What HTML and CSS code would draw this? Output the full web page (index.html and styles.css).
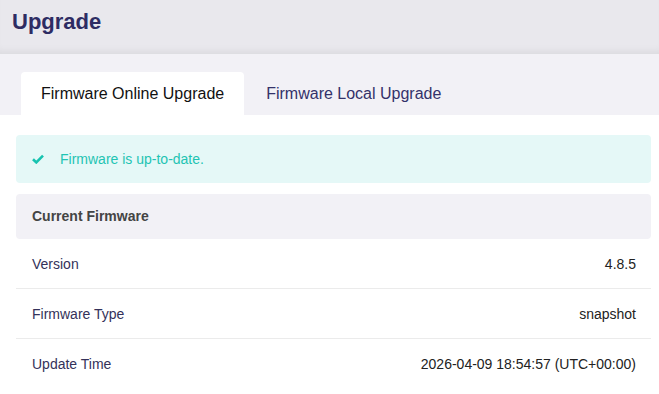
FILE: index.html
```html
<!DOCTYPE html>
<html lang="en">
<head>
  <meta charset="UTF-8">
  <meta name="viewport" content="width=device-width, initial-scale=1.0">
  <title>Upgrade</title>
  <link rel="stylesheet" href="styles.css">
</head>
<body>
  <div class="page-header">
    <h1>Upgrade</h1>
  </div>

  <div class="tabs">
    <div class="tab active">Firmware Online Upgrade</div>
    <div class="tab">Firmware Local Upgrade</div>
  </div>

  <div class="content">
    <div class="alert">
      <svg class="alert-icon" viewBox="0 0 12 10" width="12" height="10">
        <path d="M1 5.2 L4.3 8.4 L11 1.6" fill="none" stroke="#17c3b0" stroke-width="2.6"/>
      </svg>
      <span>Firmware is up-to-date.</span>
    </div>

    <div class="info-table">
      <div class="info-head">Current Firmware</div>
      <div class="info-row">
        <span>Version</span>
        <span>4.8.5</span>
      </div>
      <div class="info-row">
        <span>Firmware Type</span>
        <span>snapshot</span>
      </div>
      <div class="info-row">
        <span>Update Time</span>
        <span>2026-04-09 18:54:57 (UTC+00:00)</span>
      </div>
    </div>
  </div>
</body>
</html>
```

FILE: styles.css
```css
body { margin: 0; font-family: "Liberation Sans", Arial, sans-serif; color: #333; background: #fff; }
.page-header { height: 54px; box-sizing: border-box; padding: 9px 12px 0; background: #e9e8ed; box-shadow: inset 0 -8px 8px -6px rgba(0,0,0,0.07); }
.page-header h1 { margin: 0; font-size: 22px; line-height: 26px; font-weight: bold; color: #2e2c63; }
.tabs { display: flex; background: #f2f1f6; padding: 18px 0 0 21px; }
.tab { font-size: 16px; line-height: 43px; padding: 0 20px; margin-right: 2px; color: #34326a; }
.tab.active { background: #fff; color: #111; border-radius: 4px 4px 0 0; }
.content { padding: 20px 8px 0 16px; }
.alert { display: flex; align-items: center; height: 48px; padding: 0 16px; background: #e5f8f7; border-radius: 4px; color: #1fc4b3; font-size: 14px; }
.alert-icon { margin-right: 16px; }
.info-table { margin-top: 11px; }
.info-head { height: 45px; line-height: 45px; padding: 0 16px; background: #f2f1f6; border-radius: 4px; font-size: 14px; font-weight: bold; color: #444; }
.info-row { display: flex; justify-content: space-between; align-items: center; box-sizing: border-box; height: 50px; padding: 0 15px 0 16px; font-size: 14px; border-bottom: 1px solid #ebebeb; }
.info-row span:first-child { color: #34325a; }
.info-row span:last-child { color: #222; }
.info-row:last-child { border-bottom: none; }
```
